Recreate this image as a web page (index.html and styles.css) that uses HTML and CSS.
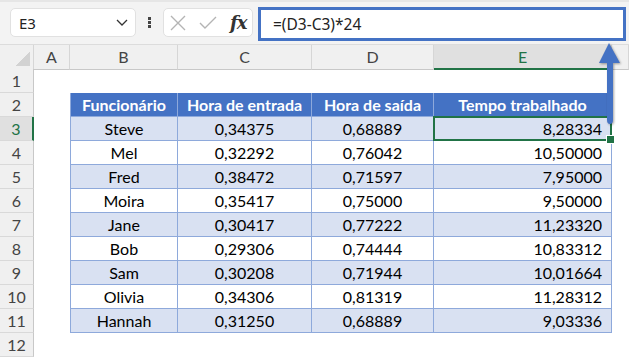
FILE: index.html
```html
<!DOCTYPE html>
<html lang="pt-BR">
<head>
    <meta charset="UTF-8">
    <title>Tempo trabalhado</title>
    <link rel="stylesheet" href="styles.css">
</head>
<body>

    <!-- Barra de fórmulas -->
    <div class="barra-formula">
        <div class="caixa-nome">
            <span>E3</span>
            <svg class="seta-lista" width="12" height="7" viewBox="0 0 12 7"><path d="M1 1 L6 6 L11 1" fill="none" stroke="#333" stroke-width="1.3"/></svg>
        </div>
        <div class="pontos"><span></span><span></span><span></span></div>
        <div class="caixa-fx">
            <svg width="18" height="16" viewBox="0 0 18 16"><path d="M2 1 L16 15 M16 1 L2 15" stroke="#b4b4b4" stroke-width="1.4" fill="none"/></svg>
            <svg width="18" height="16" viewBox="0 0 18 16"><path d="M1 8 L6 13 L17 2" stroke="#b4b4b4" stroke-width="1.4" fill="none"/></svg>
            <span class="fx">fx</span>
        </div>
        <div class="entrada-formula">=(D3-C3)*24</div>
    </div>

    <!-- Planilha -->
    <div class="planilha">
        <div class="linha cabecalho-colunas">
            <div class="canto"><span></span></div>
            <div class="col">A</div>
            <div class="col">B</div>
            <div class="col">C</div>
            <div class="col">D</div>
            <div class="col ativa">E</div>
            <div class="col"></div>
        </div>

        <div class="linha">
            <div class="num">1</div><div></div><div></div><div></div><div></div><div></div><div></div>
        </div>
        <div class="linha">
            <div class="num">2</div><div></div>
            <div class="t th primeira">Funcionário</div>
            <div class="t th">Hora de entrada</div>
            <div class="t th">Hora de saída</div>
            <div class="t th">Tempo trabalhado</div>
            <div></div>
        </div>
        <div class="linha">
            <div class="num ativa">3</div><div></div>
            <div class="t faixa primeira">Steve</div>
            <div class="t faixa">0,34375</div>
            <div class="t faixa">0,68889</div>
            <div class="t faixa dir selecionada">8,28334</div>
            <div></div>
        </div>
        <div class="linha">
            <div class="num">4</div><div></div>
            <div class="t primeira">Mel</div>
            <div class="t">0,32292</div>
            <div class="t">0,76042</div>
            <div class="t dir">10,50000</div>
            <div></div>
        </div>
        <div class="linha">
            <div class="num">5</div><div></div>
            <div class="t faixa primeira">Fred</div>
            <div class="t faixa">0,38472</div>
            <div class="t faixa">0,71597</div>
            <div class="t faixa dir">7,95000</div>
            <div></div>
        </div>
        <div class="linha">
            <div class="num">6</div><div></div>
            <div class="t primeira">Moira</div>
            <div class="t">0,35417</div>
            <div class="t">0,75000</div>
            <div class="t dir">9,50000</div>
            <div></div>
        </div>
        <div class="linha">
            <div class="num">7</div><div></div>
            <div class="t faixa primeira">Jane</div>
            <div class="t faixa">0,30417</div>
            <div class="t faixa">0,77222</div>
            <div class="t faixa dir">11,23320</div>
            <div></div>
        </div>
        <div class="linha">
            <div class="num">8</div><div></div>
            <div class="t primeira">Bob</div>
            <div class="t">0,29306</div>
            <div class="t">0,74444</div>
            <div class="t dir">10,83312</div>
            <div></div>
        </div>
        <div class="linha">
            <div class="num">9</div><div></div>
            <div class="t faixa primeira">Sam</div>
            <div class="t faixa">0,30208</div>
            <div class="t faixa">0,71944</div>
            <div class="t faixa dir">10,01664</div>
            <div></div>
        </div>
        <div class="linha">
            <div class="num">10</div><div></div>
            <div class="t primeira">Olivia</div>
            <div class="t">0,34306</div>
            <div class="t">0,81319</div>
            <div class="t dir">11,28312</div>
            <div></div>
        </div>
        <div class="linha">
            <div class="num">11</div><div></div>
            <div class="t faixa primeira">Hannah</div>
            <div class="t faixa">0,31250</div>
            <div class="t faixa">0,68889</div>
            <div class="t faixa dir">9,03336</div>
            <div></div>
        </div>
        <div class="linha">
            <div class="num">12</div><div></div><div></div><div></div><div></div><div></div><div></div>
        </div>
    </div>

    <!-- Seta apontando para a barra de fórmulas -->
    <svg class="seta-destaque" width="28" height="88" viewBox="0 0 28 88">
        <path d="M13 3 L24 23 L17 23 L17 80 Q17 84 14 84 Q11 84 11 80 L11 23 L3 23 Z" fill="#4472c4"/>
    </svg>

</body>
</html>
```

FILE: styles.css
```css
/* --- Base --- */
* {
    margin: 0;
    padding: 0;
    box-sizing: border-box;
}

body {
    width: 629px;
    height: 359px;
    overflow: hidden;
    background: #fff;
    font-family: Lato, 'Noto Sans', sans-serif;
    color: #1a1a1a;
    position: relative;
}

/* --- Barra de fórmulas --- */
.barra-formula {
    height: 45px;
    background: #f3f3f3;
    border-top: 2px solid #e6e6e6;
    border-bottom: 1px solid #dcdcdc;
    display: flex;
    align-items: flex-start;
    padding: 6px 3px 0 10px;
}

.caixa-nome {
    width: 126px;
    height: 29px;
    background: #fff;
    border: 1px solid #e1e1e1;
    border-radius: 5px;
    display: flex;
    align-items: center;
    justify-content: space-between;
    padding: 0 7px 0 8px;
    font-family: 'Noto Sans', sans-serif;
    font-size: 15px;
    color: #222;
}

.pontos {
    width: 27px;
    height: 29px;
    display: flex;
    flex-direction: column;
    align-items: center;
    justify-content: center;
    gap: 1px;
}

.pontos span {
    width: 3px;
    height: 3px;
    background: #444;
}

.caixa-fx {
    width: 90px;
    height: 29px;
    background: #fff;
    border: 1px solid #e1e1e1;
    border-radius: 5px;
    display: flex;
    align-items: center;
    gap: 12px;
    padding-left: 5px;
}

.fx {
    font-family: 'DejaVu Serif', serif;
    font-style: italic;
    font-weight: bold;
    font-size: 18px;
    color: #333;
    letter-spacing: -1px;
    margin-left: 1px;
}

.entrada-formula {
    flex: 1;
    height: 34px;
    margin-left: 5px;
    margin-top: -1px;
    background: #fff;
    border: 3px solid #4472c4;
    padding-left: 12px;
    font-family: 'Noto Sans', sans-serif;
    font-size: 15.5px;
    line-height: 28px;
    color: #222;
}

/* --- Planilha --- */
.linha {
    display: grid;
    grid-template-columns: 34px 36px 108px 134px 122px 178px 1fr;
    height: 24px;
}

.canto,
.col {
    background: #f0f0f0;
    border-right: 1px solid #d6d6d6;
    border-bottom: 1px solid #c8c8c8;
}

.canto {
    display: flex;
    justify-content: flex-end;
    align-items: flex-end;
    padding: 0 3px 3px 0;
}

.canto span {
    width: 15px;
    height: 14px;
    background: linear-gradient(to bottom right, transparent 50%, #d2d2d2 50%);
}

.col {
    text-align: center;
    font-size: 16px;
    line-height: 23px;
    color: #444;
}

.col.ativa {
    background: #e0e0e0;
    color: #217346;
    border-bottom: 2px solid #217346;
}

.num {
    background: #f0f0f0;
    border-right: 1px solid #c8c8c8;
    border-bottom: 1px solid #d9d9d9;
    text-align: center;
    font-size: 16px;
    line-height: 23px;
    color: #444;
}

.num.ativa {
    background: #e0e0e0;
    color: #217346;
    border-right: 2px solid #217346;
}

/* --- Tabela --- */
.t {
    border-right: 1px solid #8ea9db;
    border-bottom: 1px solid #8ea9db;
    text-align: center;
    font-size: 16px;
    line-height: 23px;
    color: #000;
    white-space: nowrap;
}

.t.primeira {
    border-left: 1px solid #8ea9db;
}

.th {
    background: #4472c4;
    color: #fff;
    font-weight: bold;
}

.faixa {
    background: #d9e1f2;
}

.dir {
    text-align: right;
    padding-right: 9px;
}

.selecionada {
    position: relative;
}

.selecionada::before {
    content: '';
    position: absolute;
    left: -1px;
    top: -1px;
    right: -1px;
    bottom: -1px;
    border: 2px solid #217346;
}

.selecionada::after {
    content: '';
    position: absolute;
    right: -4px;
    bottom: -4px;
    width: 7px;
    height: 7px;
    background: #217346;
    border: 1px solid #fff;
}

/* --- Seta de destaque --- */
.seta-destaque {
    position: absolute;
    left: 596px;
    top: 40px;
    filter: drop-shadow(1px 1px 1px rgba(0, 0, 0, 0.35));
}
```
